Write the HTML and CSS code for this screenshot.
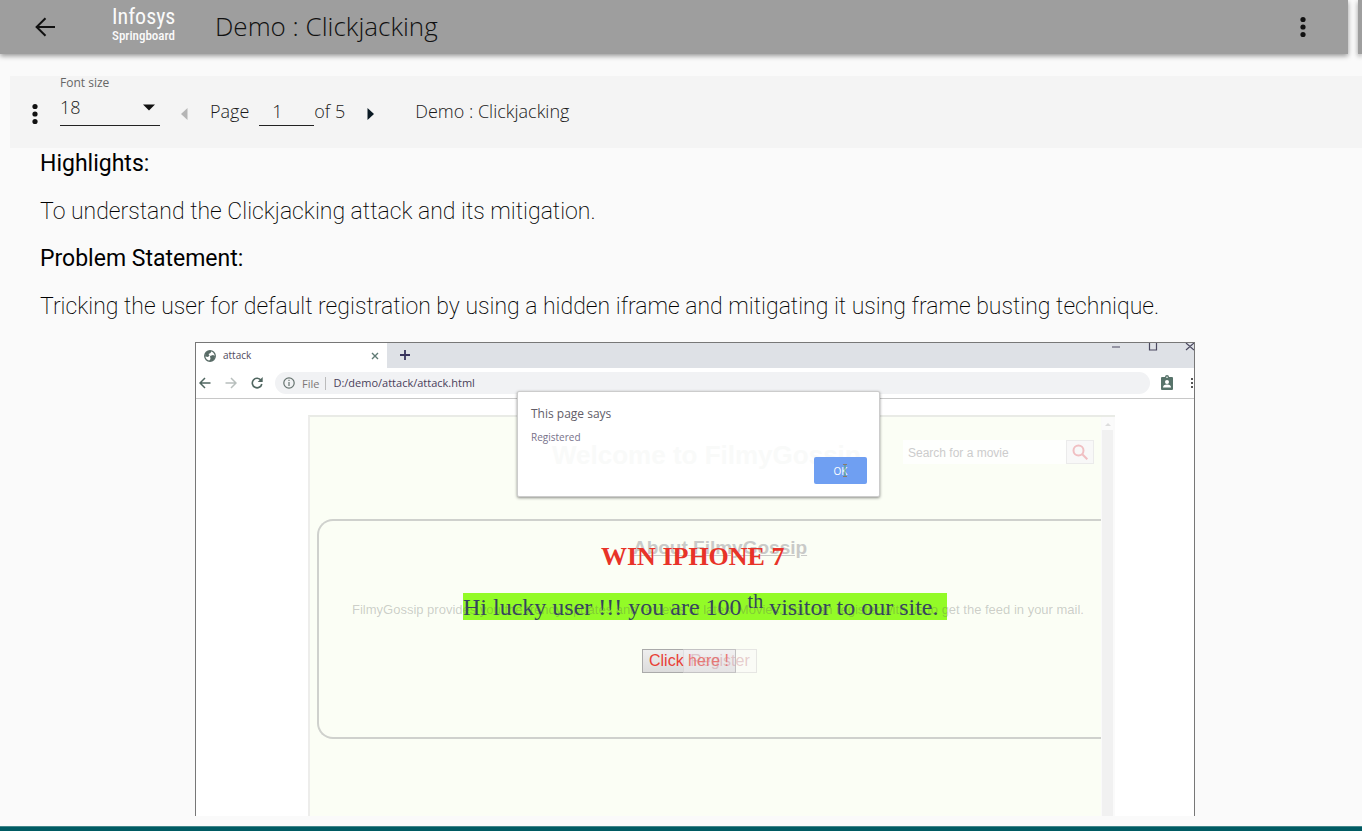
FILE: index.html
```html
<!DOCTYPE html>
<html lang="en">
<head>
<meta charset="utf-8">
<title>Demo : Clickjacking</title>
<link rel="stylesheet" href="styles.css">
</head>
<body>
<header class="top">
  <div class="appbar">
    <button class="icon-btn back" aria-label="Back"><svg width="24" height="24" viewBox="0 0 24 24" fill="none" stroke="#111" stroke-width="2"><path d="M22 12H4M12.500 3.200 3.600 12l8.900 8.800"/></svg></button>
    <div class="logo"><span class="logo-name">Infosys</span><span class="logo-sub">Springboard</span></div>
    <h1 class="title">Demo : Clickjacking</h1>
    <button class="icon-btn more" aria-label="More options"><svg width="8" height="22" viewBox="0 0 8 22" fill="#111"><circle cx="4" cy="3.500" r="2.600"/><circle cx="4" cy="11" r="2.600"/><circle cx="4" cy="18.500" r="2.600"/></svg></button>
  </div>
  <div class="side-bar"></div>
</header>
<main class="viewer">
  <div class="toolbar">
    <button class="icon-btn menu" aria-label="Document menu"><svg width="8" height="22" viewBox="0 0 8 22" fill="#111"><circle cx="4" cy="3.500" r="2.600"/><circle cx="4" cy="11" r="2.600"/><circle cx="4" cy="18.500" r="2.600"/></svg></button>
    <div class="font-field">
      <label for="size">Font size</label>
      <div class="select-wrap">
        <select id="size"><option>18</option><option>20</option></select>
        <svg class="caret" width="12" height="7" viewBox="0 0 12 7"><path d="M0 0.500h12L6 6.500z" fill="#111"/></svg>
      </div>
    </div>
    <button class="icon-btn prev" aria-label="Previous page" disabled><svg width="7" height="12" viewBox="0 0 7 12"><path d="M6.500 0v12L0 6z" fill="#b5b5b5"/></svg></button>
    <label class="page-label" for="page">Page</label>
    <input class="page-input" id="page" type="text" value="1">
    <span class="page-label">of 5</span>
    <button class="icon-btn next" aria-label="Next page"><svg width="7" height="12" viewBox="0 0 7 12"><path d="M.5 0v12L7 6z" fill="#0b1a24"/></svg></button>
    <span class="page-label doc-name">Demo : Clickjacking</span>
  </div>
  <article class="content">
    <h2>Highlights:</h2>
    <p>To understand the Clickjacking attack and its mitigation.</p>
    <h2>Problem Statement:</h2>
    <p>Tricking the user for default registration by using a hidden iframe and mitigating it using frame busting technique.</p>
    <figure class="browser">
      <div class="tabs">
        <div class="tab">
          <svg width="12" height="12" viewBox="0 0 12 12"><circle cx="6" cy="6" r="5.300" fill="#fff" stroke="#586b66" stroke-width="1.300"/><path d="M1 6.500 1.500 3 4 1 7.500 1 6.500 3 4.500 4 5.500 5.500 4 7 1.500 6.500zM6 6l3-1 2 1-.5 3L7.500 11 5 11 6.500 9z" fill="#586b66"/></svg>
          <span class="tab-name">attack</span>
          <svg class="tab-close" width="8" height="8" viewBox="0 0 8 8" stroke="#5f7a74" stroke-width="1.400"><path d="m1 1 6 6M7 1 1 7"/></svg>
        </div>
        <svg class="plus" width="10" height="10" viewBox="0 0 10 10" stroke="#37335c" stroke-width="1.800"><path d="M5 0v10M0 5h10"/></svg>
        <svg class="win" width="83" height="8" viewBox="0 0 83 8" fill="none" stroke="#4b4960"><path d="M1 4h8M38.500 0v7h7V0M75 0l8 7M83 0l-8 7" stroke-width="1.200"/></svg>
      </div>
      <div class="address-row">
        <svg width="12" height="12" viewBox="0 0 12 12" fill="none" stroke="#506660" stroke-width="1.500"><path d="M11.500 6H1.500M6 1 1 6l5 5"/></svg>
        <svg width="12" height="12" viewBox="0 0 12 12" fill="none" stroke="#b8bfbd" stroke-width="1.500"><path d="M.5 6h10M6 1l5 5-5 5"/></svg>
        <svg width="12" height="12" viewBox="0 0 12 12" fill="none" stroke="#506660" stroke-width="1.600"><path d="M10 3.200A4.800 4.800 0 1 0 10.800 7"/><path d="M11.700 0v5H6.700z" fill="#506660" stroke="none"/></svg>
        <div class="address">
          <svg width="12" height="12" viewBox="0 0 12 12" fill="none" stroke="#66736f" stroke-width="1.200"><circle cx="6" cy="6" r="5.200"/><path d="M6 5v4M6 2.800v1.300"/></svg>
          <span class="scheme">File</span>
          <span class="url">D:/demo/attack/attack.html</span>
        </div>
        <svg class="badge" width="14" height="16" viewBox="0 0 14 16"><path d="M2 2h3a2 2 0 0 1 4 0h3q1 0 1 1v11q0 1-1 1H2q-1 0-1-1V3q0-1 1-1z" fill="#57736a"/><circle cx="7" cy="7" r="2" fill="#fff"/><path d="M3 12.500q0-3 4-3t4 3z" fill="#fff"/><circle cx="7" cy="2.200" r=".8" fill="#fff"/></svg>
        <svg class="dots" width="3" height="12" viewBox="0 0 3 12" fill="#555"><path d="M0 1h2v2H0zM0 5h2v2H0zM0 9h2v2H0z"/></svg>
      </div>
      <div class="page">
        <div class="frame">
          <div class="frame-main">
            <div class="search-row">
              <strong class="welcome">Welcome to FilmyGossip</strong>
              <input class="search" type="text" placeholder="Search for a movie" aria-label="Search for a movie">
              <button class="search-btn" aria-label="Search"><svg width="16" height="16" viewBox="0 0 16 16" fill="none" stroke="#f0bfc2" stroke-width="2"><circle cx="6.500" cy="6.500" r="5"/><path d="m10.300 10.300 5 5"/></svg></button>
            </div>
            <section class="about">
              <h3>About FilmyGossip</h3>
              <p class="about-text">FilmyGossip provides you the trendy updates and reviews of latest Movies. You can register with us to get the feed in your mail.</p>
              <button class="register">Register</button>
            </section>
          </div>
          <div class="scroll"><svg width="6" height="4" viewBox="0 0 6 4"><path d="m0 4 3-3 3 3z" fill="#ddd"/></svg></div>
        </div>
        <strong class="win-text">WIN IPHONE 7</strong>
        <div class="lucky">Hi lucky user !!! you are 100 <sup>th</sup> visitor to our site.</div>
        <button class="click-here">Click here !</button>
        <div class="dialog" role="dialog" aria-label="This page says">
          <div class="dialog-title">This page says</div>
          <div class="dialog-text">Registered</div>
          <button class="ok">OK<svg class="cursor" width="6" height="13" viewBox="0 0 6 13" fill="none" stroke="#8a7a6c"><path d="M1 .5h4M1 12.500h4"/><path d="M3 1v11" stroke="#55a36c"/></svg></button>
        </div>
      </div>
    </figure>
  </article>
</main>
<footer class="footer"></footer>
</body>
</html>
```

FILE: styles.css
```css
* { box-sizing: border-box; }
body {
  margin: 0;
  min-height: 100vh;
  display: flex;
  flex-direction: column;
  background: #fafafa;
  color: #1a1a1a;
  font-family: "Open Sans", sans-serif;
  overflow-x: hidden;
}
button { font: inherit; padding: 0; border: 0; background: none; }
h1, h2, h3, p, figure { margin: 0; }
svg { display: block; flex: none; }

.top { display: flex; gap: 10px; height: 54px; }
.appbar, .side-bar { background: #9e9e9e; box-shadow: 0 2px 5px rgba(0, 0, 0, .4); }
.appbar { flex: 1; display: flex; align-items: center; padding: 0 41px 0 33px; }
.side-bar { width: 4px; }
.logo {
  display: flex;
  flex-direction: column;
  width: 62px;
  margin: 0 41px 4px 55px;
  color: #fafafa;
  white-space: nowrap;
}
.logo-name { font: 400 22px/22px "Roboto Condensed", "Liberation Sans Narrow", Roboto, sans-serif; }
.logo-sub { font: 500 13px/16px "Roboto Condensed", "Liberation Sans Narrow", Roboto, sans-serif; }
.title { padding-bottom: 2px; font-size: 26px; font-weight: 300; line-height: 34px; color: #111; }
.more { margin-left: auto; }

.viewer { flex: 1; padding-top: 22px; }
.toolbar {
  display: flex;
  align-items: center;
  height: 72px;
  margin-left: 10px;
  padding-left: 21px;
  background: #f4f4f4;
  font-size: 18px;
  font-weight: 300;
}
.menu { margin: 4px 21px 0 0; }
.font-field { width: 100px; height: 50px; margin-top: -22px; border-bottom: 1px solid #222; }
.font-field label { display: block; font-size: 12px; font-weight: 400; line-height: 14px; color: #666; }
.select-wrap { display: flex; align-items: center; height: 35px; }
.select-wrap select {
  flex: 1;
  appearance: none;
  border: 0;
  padding: 0 0 2px;
  background: none;
  color: inherit;
  font: inherit;
}
.caret { margin-right: 5px; }
.prev { margin: 4px 22px 0 21px; }
.page-label { padding-bottom: 2px; }
.page-input {
  width: 55px;
  height: 28px;
  margin-left: 10px;
  padding: 0 0 2px 13px;
  border: 0;
  border-bottom: 1px solid #222;
  background: none;
  color: inherit;
  font: inherit;
}
.next { margin: 4px 0 0 22px; }
.doc-name { margin-left: 41px; }

.content {
  padding: 3px 12px 10px 40px;
  color: #000;
  font-family: Roboto, sans-serif;
  font-size: 23px;
  font-weight: 200;
  line-height: 26px;
}
.content h2 { font-size: 23px; font-weight: 400; margin-bottom: 22px; }
.content > p { margin-bottom: 21px; }

.browser {
  max-width: 1000px;
  margin: 22px auto 0;
  border: 1px solid #777;
  border-bottom: 0;
  background: #fff;
  font: 400 10px/14px "Open Sans", sans-serif;
  overflow: hidden;
}
.tabs { display: flex; height: 25px; background: #dee1e6; }
.tab {
  display: flex;
  align-items: center;
  gap: 7px;
  width: 191px;
  padding: 0 8px;
  background: #fff;
  color: #514a5c;
}
.tab-name { padding-bottom: 2px; }
.tab-close { margin-left: auto; }
.plus { margin: 7px 0 0 13px; }
.win { margin-left: auto; }
.address-row {
  display: flex;
  align-items: center;
  gap: 14px;
  height: 31px;
  padding-left: 3px;
  border-bottom: 1px solid #c8c8c8;
}
.address {
  flex: 1;
  display: flex;
  align-items: center;
  gap: 7px;
  height: 22px;
  margin-left: -2px;
  padding-left: 8px;
  border-radius: 11px;
  background: #f1f2f4;
  font-size: 11px;
}
.scheme { padding-right: 6px; border-right: 1px solid #bbb; color: #7d7775; line-height: 13px; }
.url { color: #49405a; }
.badge { margin-left: -4px; }
.dots { margin-left: 3px; }

.page { position: relative; padding: 16px 79px 0 112px; }
.frame {
  display: flex;
  border-top: 2px solid #e9ebe6;
  border-left: 2px solid #ededeb;
  font-family: "Liberation Sans", sans-serif;
}
.frame-main { flex: 1; padding: 23px 0 77px 7px; background: #fbfef5; }
.scroll { display: flex; justify-content: center; width: 14px; padding-top: 5px; background: linear-gradient(#fbfbfb 13px, #f1f1f1 13px); border-right: 2px solid #fafafa; border-left: 1px solid #fafafa; }
.search-row { display: flex; align-items: center; height: 24px; padding-right: 7px; }
.welcome { position: relative; z-index: 3; margin: 6px auto 0 235px; font-size: 26px; line-height: 28px; color: #f9faf9; white-space: nowrap; }
.search {
  width: 163px;
  height: 24px;
  padding: 2px 5px 0;
  border: 0;
  background: #fefffd;
  font: 12px "Liberation Sans", sans-serif;
}
.search::placeholder { color: #ccc; opacity: 1; }
.search-btn { display: grid; place-items: center; width: 28px; height: 24px; border: 1px solid #ebebeb; background: #f8f8f8; }
.about {
  display: flex;
  flex-direction: column;
  align-items: center;
  height: 220px;
  margin: 55px 0 0;
  border: 2px solid #cfd1cd;
  border-right: 0;
  border-radius: 16px 0 0 16px;
  padding-top: 15px;
}
.about h3 { font-size: 19px; line-height: 24px; color: #c9cac8; text-decoration: underline; padding-left: 20px; }
.about-text { position: relative; z-index: 2; margin-top: 42px; padding-left: 16px; font-size: 13px; line-height: 16px; color: rgba(90, 90, 90, .3); white-space: nowrap; }
.register {
  position: relative;
  z-index: 2;
  width: 74px;
  height: 24px;
  margin: 31px 0 0 20px;
  border: 1px solid rgba(200, 200, 200, .4);
  background: rgba(250, 245, 250, .3);
  color: rgba(200, 130, 140, .4);
  font-size: 16px;
}

/* Bait content and alert stacked over the framed page */
.win-text, .lucky, .click-here, .dialog { position: absolute; white-space: nowrap; }
.win-text { left: 405px; top: 143px; font: 700 26px/30px "Liberation Serif", serif; color: #e83328; }
.lucky {
  left: 267px;
  top: 194px;
  width: 484px;
  height: 27px;
  background: #93fb27;
  font: 24px/28px "Liberation Serif", serif;
  color: #35445f;
}
.lucky sup { font-size: 20px; line-height: 0; vertical-align: 7px; }
.click-here {
  left: 446px;
  top: 250px;
  width: 94px;
  height: 24px;
  border: 1px solid #aaa;
  background: linear-gradient(#eee, #dcdcdc);
  color: #e84036;
  font: 16px "Liberation Sans", sans-serif;
}
.dialog {
  left: 321px;
  top: -8px;
  width: 363px;
  height: 106px;
  padding: 14px 13px;
  border: 1px solid #ccc;
  border-radius: 2px;
  background: #fff;
  box-shadow: 0 1px 3px rgba(0, 0, 0, .45);
}
.dialog-title { font-size: 12px; line-height: 16px; color: #625d68; }
.dialog-text { margin-top: 8px; color: #77718a; }
.ok {
  position: absolute;
  right: 12px;
  bottom: 12px;
  z-index: 4;
  width: 53px;
  height: 27px;
  border-radius: 2px;
  background: #6f9ff2;
  color: #fff;
}
.cursor { position: absolute; left: 28px; top: 7px; }
.footer { height: 5px; border-top: 1px solid #43868a; background: #005b63; }
```
